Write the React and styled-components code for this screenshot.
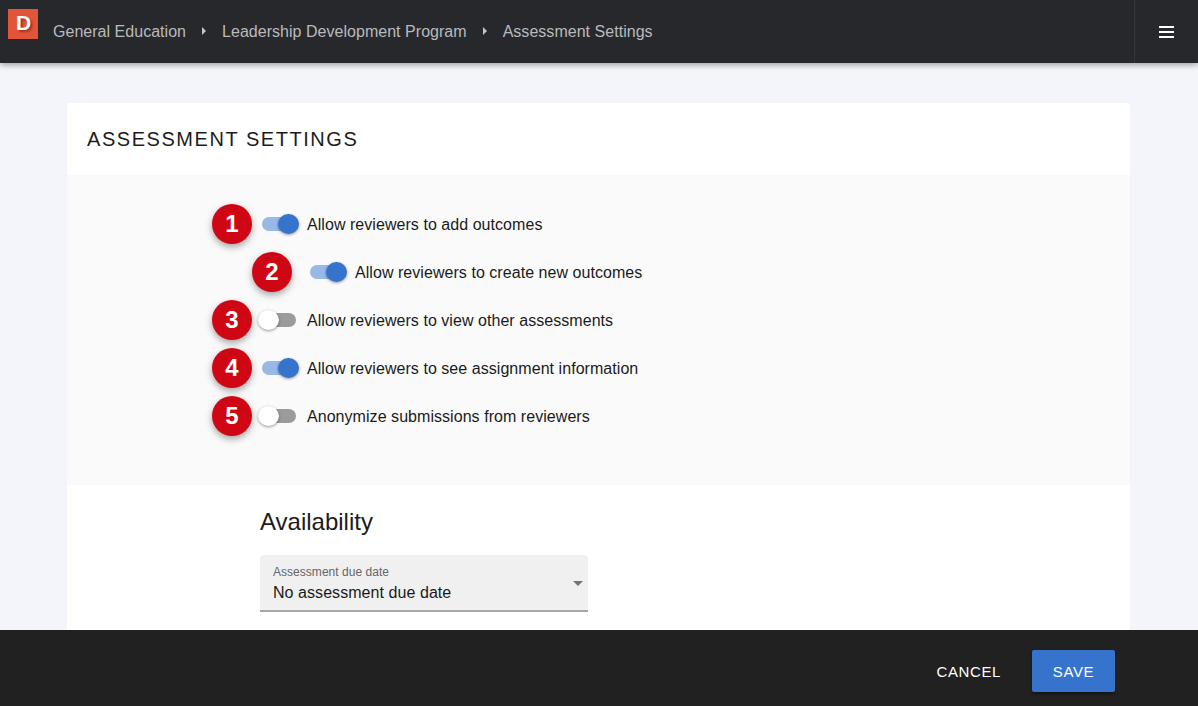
import React from 'react';
import styled, { createGlobalStyle } from 'styled-components';

const settings = [
    { label: 'Allow reviewers to add outcomes', on: true },
    { label: 'Allow reviewers to create new outcomes', on: true, nested: true },
    { label: 'Allow reviewers to view other assessments', on: false },
    { label: 'Allow reviewers to see assignment information', on: true },
    { label: 'Anonymize submissions from reviewers', on: false },
];

const crumbs = ['General Education', 'Leadership Development Program', 'Assessment Settings'];

const App = () => {
    return (
        <Page>
            <GlobalStyle />
            <Header>
                <Logo>D</Logo>
                <Breadcrumbs>
                    {crumbs.map((crumb, i) => (
                        <React.Fragment key={crumb}>
                            {i > 0 && <Caret />}
                            <Crumb>{crumb}</Crumb>
                        </React.Fragment>
                    ))}
                </Breadcrumbs>
                <MenuButton aria-label="Menu">
                    <span />
                    <span />
                    <span />
                </MenuButton>
            </Header>
            <Main>
                <Card>
                    <CardHeader>Assessment Settings</CardHeader>
                    <Settings>
                        {settings.map((item, i) => (
                            <Row key={item.label} $nested={item.nested}>
                                <Badge>{i + 1}</Badge>
                                <Switch $on={item.on} $nested={item.nested}>
                                    <Thumb $on={item.on} />
                                </Switch>
                                <Label>{item.label}</Label>
                            </Row>
                        ))}
                    </Settings>
                    <Availability>
                        <Heading>Availability</Heading>
                        <Select>
                            <SelectLabel>Assessment due date</SelectLabel>
                            <SelectValue>No assessment due date</SelectValue>
                            <SelectArrow />
                        </Select>
                    </Availability>
                </Card>
            </Main>
            <Footer>
                <CancelButton>Cancel</CancelButton>
                <SaveButton>Save</SaveButton>
            </Footer>
        </Page>
    );
};

const GlobalStyle = createGlobalStyle`
    html, body {
        margin:0;
        padding:0;
        height:100%;
        overflow:hidden;
    }
    body {
        font-family:"Liberation Sans", Arial, sans-serif;
        background:#f4f5fa;
    }
    * {
        box-sizing:border-box;
    }
`;

const Page = styled.div`
    height:706px;
    display:flex;
    flex-direction:column;
    overflow:hidden;
    background:#f4f5fa;
`;

const Header = styled.header`
    flex:none;
    height:63px;
    display:flex;
    align-items:flex-start;
    padding-left:8px;
    background:#27282c;
    box-shadow:0 2px 6px rgba(0,0,0,0.35);
    position:relative;
    z-index:1;
`;

const Logo = styled.div`
    width:30px;
    height:30px;
    margin-top:9px;
    padding:1px 0 0 8px;
    background:#e2553a;
    color:#fff;
    font-size:21px;
    font-weight:700;
    line-height:26px;
    text-shadow:2px 2px 2px rgba(120,30,10,0.6);
`;

const Breadcrumbs = styled.nav`
    flex:1;
    height:62px;
    display:flex;
    align-items:center;
    padding-left:15px;
`;

const Crumb = styled.span`
    padding-top:1px;
    font-size:16px;
    letter-spacing:0.03px;
    color:#b9babc;
`;

const Caret = styled.span`
    width:0;
    height:0;
    margin:0 16px;
    border-left:4px solid #c4c5c7;
    border-top:4px solid transparent;
    border-bottom:4px solid transparent;
`;

const MenuButton = styled.button`
    width:64px;
    height:63px;
    display:flex;
    flex-direction:column;
    align-items:center;
    justify-content:center;
    gap:3px;
    padding:0;
    background:none;
    border:0;
    border-left:1px solid #35363a;
    span {
        display:block;
        width:15px;
        height:2px;
        background:#fff;
    }
`;

const Main = styled.main`
    flex:1;
    min-height:0;
    padding:40px 68px 0 67px;
    overflow:hidden;
`;

const Card = styled.section`
    background:#fff;
    border-radius:2px;
`;

const CardHeader = styled.h1`
    height:72px;
    margin:0;
    padding:0 20px;
    display:flex;
    align-items:center;
    font-size:20px;
    font-weight:400;
    letter-spacing:1.55px;
    text-transform:uppercase;
    color:#1c1c1c;
`;

const Settings = styled.div`
    height:310px;
    padding:25px 0 0 145px;
    background:#fafafa;
`;

const Row = styled.div`
    height:48px;
    display:flex;
    align-items:center;
    padding-left:${(p) => (p.$nested ? '40px' : '0')};
`;

const Badge = styled.div`
    flex:none;
    width:40px;
    height:40px;
    display:flex;
    align-items:center;
    justify-content:center;
    border-radius:50%;
    background:#cf0613;
    color:#fff;
    font-size:24px;
    font-weight:700;
    box-shadow:0 3px 7px rgba(0,0,0,0.35);
`;

const Switch = styled.div`
    flex:none;
    position:relative;
    width:34px;
    height:14px;
    margin:0 11px 0 ${(p) => (p.$nested ? '18px' : '10px')};
    border-radius:7px;
    background:${(p) => (p.$on ? '#98b8e6' : '#9b9b9b')};
`;

const Thumb = styled.span`
    position:absolute;
    top:-3px;
    left:${(p) => (p.$on ? '16px' : '-4px')};
    width:21px;
    height:20px;
    border-radius:50%;
    background:${(p) => (p.$on ? '#3673cd' : '#fff')};
    box-shadow:0 1px 3px rgba(0,0,0,0.4);
`;

const Label = styled.span`
    padding-top:1px;
    font-size:16px;
    letter-spacing:0.05px;
    color:#1a1a1a;
`;

const Availability = styled.div`
    padding:22px 0 0 193px;
    height:160px;
`;

const Heading = styled.h2`
    margin:0 0 18px;
    font-size:24px;
    font-weight:400;
    line-height:30px;
    color:#1c1c1c;
`;

const Select = styled.div`
    position:relative;
    width:328px;
    height:57px;
    padding:10px 12px 0 13px;
    background:#f0f0f0;
    border-bottom:2px solid #a8a8a8;
    border-radius:4px 4px 0 0;
`;

const SelectLabel = styled.div`
    font-size:12px;
    line-height:14px;
    letter-spacing:0.03px;
    color:#666;
`;

const SelectValue = styled.div`
    margin-top:3px;
    font-size:16px;
    line-height:22px;
    letter-spacing:0.06px;
    color:#1a1a1a;
`;

const SelectArrow = styled.span`
    position:absolute;
    top:26px;
    right:5px;
    width:0;
    height:0;
    border-top:5px solid #757575;
    border-left:5px solid transparent;
    border-right:5px solid transparent;
`;

const Footer = styled.footer`
    flex:none;
    height:76px;
    display:flex;
    align-items:center;
    justify-content:flex-end;
    padding:6px 83px 0 0;
    background:#212121;
    position:fixed;
    left:0;
    right:0;
    bottom:0;
`;

const CancelButton = styled.button`
    margin-right:31px;
    padding:0;
    background:none;
    border:0;
    font-family:inherit;
    font-size:15px;
    letter-spacing:0.6px;
    text-transform:uppercase;
    color:#fff;
`;

const SaveButton = styled.button`
    width:83px;
    height:42px;
    background:#3673cd;
    border:0;
    border-radius:2px;
    font-family:inherit;
    font-size:15px;
    letter-spacing:0.6px;
    text-transform:uppercase;
    color:#fff;
    box-shadow:0 2px 3px rgba(0,0,0,0.4);
`;

export default App;
